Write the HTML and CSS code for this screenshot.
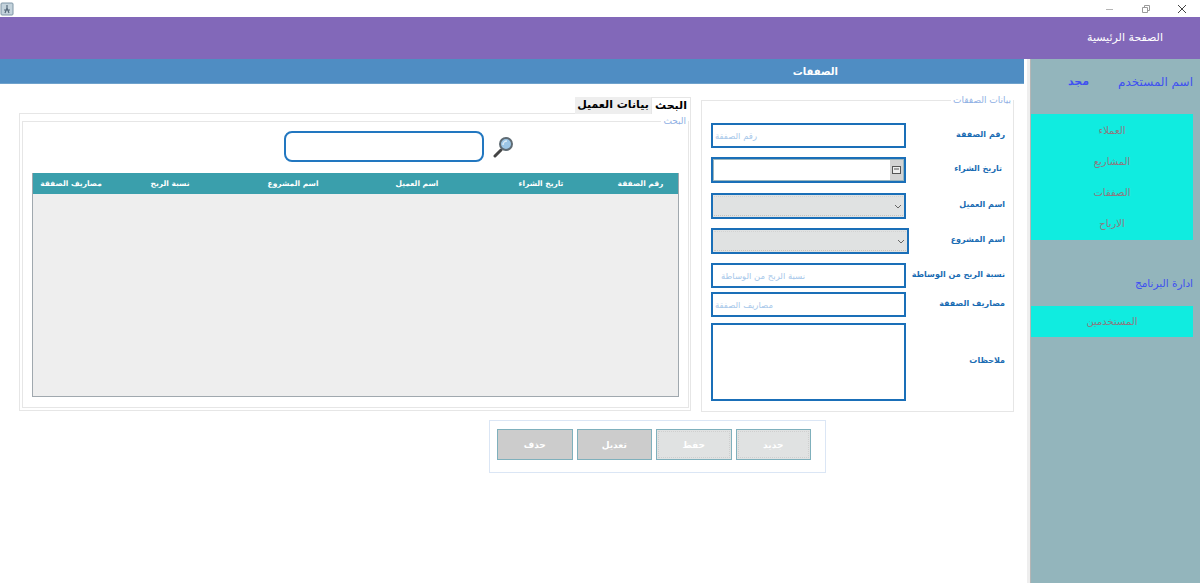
FILE: index.html
```html
<!DOCTYPE html>
<html lang="ar" dir="rtl">
<head>
  <meta charset="UTF-8" />
  <title>الصفقات</title>
  <link rel="stylesheet" href="styles.css">
</head>
<body>

  <div class="titlebar">
    <svg class="app-icon" width="14" height="14" viewBox="0 0 14 14">
      <rect x="1" y="1" width="12" height="12" rx="1" fill="#c4d3dc" stroke="#7f96a6"/>
      <path d="M7 3v3M5 11l2-5 2 5M4 8h6" stroke="#55697a" stroke-width="1.2" fill="none"/>
    </svg>
    <div class="win-btns">
      <svg width="10" height="10" viewBox="0 0 10 10"><path d="M1 5.5h7" stroke="#b5b5b5"/></svg>
      <svg width="10" height="10" viewBox="0 0 10 10"><path d="M1.5 3.5h5v5h-5zM3.500 3.500v-2h5v5h-2" stroke="#9a9a9a" fill="none"/></svg>
      <svg width="10" height="10" viewBox="0 0 10 10"><path d="M1 1l8 8M9 1l-8 8" stroke="#444" stroke-width="1"/></svg>
    </div>
  </div>

  <div class="topbar">الصفحة الرئيسية</div>

  <div class="layout">
    <aside class="sidebar">
      <div class="user-row">
        <span>اسم المستخدم</span>
        <span class="user-name">مجد</span>
      </div>
      <ul class="menu menu-main">
        <li>العملاء</li>
        <li>المشاريع</li>
        <li>الصفقات</li>
        <li>الارباح</li>
      </ul>
      <div class="side-title">ادارة البرنامج</div>
      <ul class="menu menu-admin">
        <li>المستخدمين</li>
      </ul>
    </aside>

    <div class="gutter"></div>

    <main class="main">
      <h1 class="page-title">الصفقات</h1>

      <div class="panels">
        <fieldset class="deal-box">
          <legend>بيانات الصفقات</legend>

          <div class="row row-1">
            <label>رقم الصفقة</label>
            <input class="field" type="text" placeholder="رقم الصفقة" />
          </div>
          <div class="row row-2">
            <label class="label-date">تاريخ الشراء</label>
            <div class="field date-field">
              <span class="date-btn">
                <svg width="9" height="8" viewBox="0 0 9 8"><rect x="0.500" y="0.500" width="8" height="7" fill="#eee" stroke="#555"/><path d="M2 3h5" stroke="#555"/></svg>
              </span>
            </div>
          </div>
          <div class="row row-3">
            <label>اسم العميل</label>
            <div class="field select-field">
              <svg width="8" height="5" viewBox="0 0 8 5"><path d="M1 1l3 3 3-3" stroke="#666" fill="none"/></svg>
            </div>
          </div>
          <div class="row row-4">
            <label>اسم المشروع</label>
            <div class="field select-field select-wide">
              <svg width="8" height="5" viewBox="0 0 8 5"><path d="M1 1l3 3 3-3" stroke="#666" fill="none"/></svg>
            </div>
          </div>
          <div class="row row-5">
            <label>نسبة الربح من الوساطة</label>
            <input class="field field-indent" type="text" placeholder="نسبة الربح من الوساطة" />
          </div>
          <div class="row row-6">
            <label>مصاريف الصفقة</label>
            <input class="field" type="text" placeholder="مصاريف الصفقة" />
          </div>
          <div class="row row-7">
            <label>ملاحظات</label>
            <textarea class="field"></textarea>
          </div>
        </fieldset>

        <div class="tabs-box">
          <div class="tabs">
            <span class="tab tab-active">البحث</span>
            <span class="tab">بيانات العميل</span>
          </div>
          <div class="tab-body">
            <fieldset class="search-box">
              <legend>البحث</legend>
              <div class="search-row">
                <svg class="search-icon" width="22" height="22" viewBox="0 0 22 22">
                  <path d="M3 20l6-6" stroke="#444" stroke-width="3" stroke-linecap="round"/>
                  <circle cx="14" cy="8" r="6" fill="#9cc6e6" stroke="#5f6b73" stroke-width="2"/>
                  <path d="M11 9a4 4 0 0 1 4-4" stroke="#dcecf7" stroke-width="1.500" fill="none"/>
                </svg>
                <input class="search-input" type="text" />
              </div>
              <div class="table-wrap">
                <table>
                  <thead>
                    <tr>
                      <th class="col-edge">رقم الصفقة</th>
                      <th>تاريخ الشراء</th>
                      <th>اسم العميل</th>
                      <th>اسم المشروع</th>
                      <th class="col-profit">نسبة الربح</th>
                      <th class="col-last">مصاريف الصفقة</th>
                    </tr>
                  </thead>
                </table>
              </div>
            </fieldset>
          </div>
        </div>
      </div>

      <div class="actions">
        <button class="btn btn-light">جديد</button>
        <button class="btn btn-light">حفظ</button>
        <button class="btn">تعديل</button>
        <button class="btn">حذف</button>
      </div>
    </main>
  </div>

</body>
</html>
```

FILE: styles.css
```css
* {
  margin: 0;
  padding: 0;
  box-sizing: border-box;
}

html, body {
  height: 100%;
  overflow: hidden;
}

body {
  font-family: "DejaVu Sans", sans-serif;
  background-color: #fff;
  display: flex;
  flex-direction: column;
}

/* window chrome */
.titlebar {
  height: 17px;
  flex-shrink: 0;
  direction: ltr;
  display: flex;
  justify-content: space-between;
  align-items: center;
  background-color: #fff;
}

.win-btns {
  display: flex;
  gap: 26px;
  padding-right: 13px;
}

.topbar {
  height: 42px;
  flex-shrink: 0;
  background-color: #8268b9;
  color: #fff;
  font-size: 11px;
  line-height: 42px;
  padding-right: 37px;
}

.layout {
  flex: 1;
  display: flex;
}

/* side menu */
.sidebar {
  width: 169px;
  flex-shrink: 0;
  background-color: #93b5bc;
  padding-top: 16px;
  padding-right: 7px;
  color: #3f51f0;
  font-size: 11px;
}

.gutter {
  width: 7px;
  flex-shrink: 0;
  border-right: 1px solid #b5b5b5;
  box-shadow: inset -3px 0 0 #eee;
}

.user-row {
  display: flex;
  justify-content: space-between;
  height: 39px;
  font-size: 12px;
  padding-left: 37px;
}

.user-name {
  font-size: 11px;
  font-weight: bold;
}

.menu {
  list-style: none;
  background-color: #10ece0;
  color: #8c7a80;
  font-size: 10px;
  text-align: center;
}

.menu-main {
  height: 126px;
  padding-top: 1px;
}

.menu-main li {
  height: 31px;
  line-height: 31px;
}

.menu-admin {
  height: 31px;
  line-height: 31px;
}

.side-title {
  height: 66px;
  padding-top: 37px;
  font-size: 10.5px;
}

/* main column */
.main {
  width: 1024px;
}

.page-title {
  height: 25px;
  background-color: #4f8dc3;
  border-bottom: 1px solid #6fa2cc;
  color: #fff;
  font-size: 10px;
  font-weight: bold;
  line-height: 25px;
  padding-right: 186px;
}

.panels {
  display: flex;
  align-items: flex-start;
  gap: 10px;
  padding: 13px 10px 0 0;
}

fieldset {
  border: 1px solid #e6e6e6;
}

legend {
  color: #8fb0e4;
  font-size: 9px;
  line-height: 11px;
  padding: 0 2px;
}

/* deal form */
.deal-box {
  width: 313px;
  height: 317px;
  margin-top: -2px;
  padding: 17px 8px 0 9px;
  flex-shrink: 0;
}

.deal-box legend {
  margin-right: -8px;
}

.row {
  display: flex;
  justify-content: space-between;
  align-items: center;
}

.row label {
  color: #1a6cb3;
  font-size: 8px;
  font-weight: bold;
  white-space: nowrap;
  margin-bottom: 3px;
}

.row-1 { margin-bottom: 9px; height: 25px; }
.row-2 { margin-bottom: 10px; height: 26px; }
.row-3 { margin-bottom: 9px; height: 26px; }
.row-4 { margin-bottom: 9px; height: 26px; }
.row-5 { margin-bottom: 4px; height: 25px; }
.row-6 { margin-bottom: 6px; height: 25px; }
.row-7 { height: 78px; }

.row .label-date {
  padding-right: 3px;
}

.field {
  width: 195px;
  height: 100%;
  border: 2px solid #1a6fb8;
  background-color: #fff;
  font-family: inherit;
  font-size: 8.5px;
  text-align: left;
  padding: 0 2px;
  outline: none;
  resize: none;
  display: block;
}

.field::placeholder {
  color: #a8c8ea;
  opacity: 1;
}

.field-indent {
  padding-left: 8px;
}

.date-field {
  direction: ltr;
  display: flex;
  justify-content: flex-end;
  padding: 0;
  box-shadow: inset 0 0 0 1px #9ab5bd;
}

.date-btn {
  width: 13px;
  margin: 1px 1px 1px 0;
  background-color: #d3d3d3;
  display: flex;
  align-items: center;
  justify-content: center;
}

.select-field {
  direction: ltr;
  display: flex;
  justify-content: flex-end;
  align-items: center;
  padding-right: 2px;
  background-color: #e0e2e2;
  position: relative;
}

.select-field::after {
  content: "";
  position: absolute;
  inset: 1px;
  border-top: 1px dotted #d2d2d2;
  border-bottom: 1px dotted #c9c4bc;
}

.select-wide {
  width: 198px;
}

/* search tab */
.tabs-box {
  width: 672px;
  flex-shrink: 0;
}

.tabs {
  display: flex;
  height: 17px;
}

.tab {
  width: 76px;
  height: 17px;
  background-color: #eee;
  color: #000;
  font-size: 11px;
  font-weight: bold;
  line-height: 16px;
  text-align: center;
  white-space: nowrap;
}

.tab-active {
  width: 40px;
  background-color: #fff;
  border: 1px solid #e6e6e6;
  border-bottom: 0;
}

.tab-body {
  height: 298px;
  margin-top: -1px;
  border: 1px solid #e6e6e6;
  padding: 2px 1px 2px 2px;
}

.search-box {
  height: 292px;
  padding: 0 9px;
}

.search-box legend {
  margin-right: -9px;
}

.search-row {
  display: flex;
  align-items: center;
  height: 31px;
  margin-top: 4px;
  margin-right: 165px;
}

.search-icon {
  margin-left: 8px;
}

.search-input {
  width: 200px;
  height: 31px;
  border: 2px solid #2277c0;
  border-radius: 8px;
  background-color: #fff;
  outline: none;
}

.table-wrap {
  height: 224px;
  margin-top: 11px;
  background-color: #eee;
  border: 1px solid #a0a8ae;
  border-top: 0;
}

table {
  width: 100%;
  border-collapse: collapse;
  table-layout: fixed;
}

th {
  width: 124px;
  height: 21px;
  background-color: #3a9fac;
  color: #fff;
  font-size: 7.5px;
  font-weight: bold;
  text-align: center;
}

th.col-edge {
  width: 75px;
}

th.col-profit {
  width: 122px;
}

th.col-last {
  width: 76px;
}

/* bottom buttons */
.actions {
  display: flex;
  gap: 4px;
  width: 337px;
  height: 53px;
  margin-top: 8px;
  margin-right: 198px;
  padding: 8px 14px 0 0;
  border: 1px solid #dbe6f5;
}

.btn {
  width: 75.5px;
  height: 31px;
  background-color: #ccc;
  border: 1px solid #7fb0bc;
  color: #fff;
  font-family: inherit;
  font-size: 9px;
  font-weight: bold;
  cursor: pointer;
}

.btn-light {
  background-color: #e0e2e2;
  outline: 1px dotted #cfcfcf;
  outline-offset: -3px;
}
```
